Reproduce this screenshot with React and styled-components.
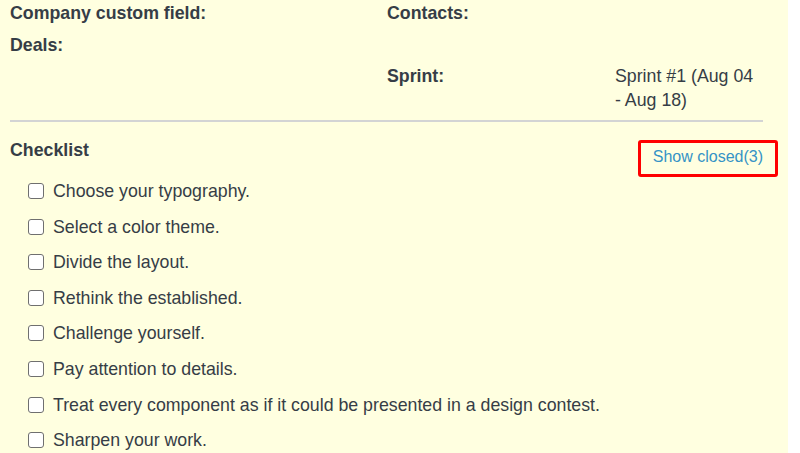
import styled, { createGlobalStyle } from 'styled-components';

const GlobalStyle = createGlobalStyle`
  html, body {
    margin: 0;
    padding: 0;
    background: #ffffff;
  }
  body {
    font-family: 'Liberation Sans', Arial, sans-serif;
  }
`;

const Panel = styled.div`
  width: 788px;
  height: 453px;
  overflow: hidden;
  background: #ffffe0;
  color: #363d46;
  padding: 1px 25px 0 10px;
  box-sizing: border-box;
`;

const Fields = styled.div`
  display: grid;
  grid-template-columns: 377px 1fr;
  padding-bottom: 8px;
  border-bottom: 2px solid #d3d4d4;
`;

const Column = styled.div`
  display: flex;
  flex-direction: column;
  gap: 8px;
`;

const Field = styled.div`
  display: grid;
  grid-template-columns: ${(p) => (p.$labelWidth ? `${p.$labelWidth}px 1fr` : '1fr')};
  min-height: ${(p) => p.$minHeight || 24}px;
  font-size: 17.75px;
  line-height: 24px;
`;

const Label = styled.div`
  font-weight: bold;
`;

const Value = styled.div`
  padding-right: 4px;
`;

const Header = styled.div`
  display: flex;
  justify-content: space-between;
  align-items: flex-start;
  margin-top: 16px;
`;

const Title = styled.div`
  font-size: 17.75px;
  line-height: 24px;
  font-weight: bold;
`;

const ShowClosed = styled.a`
  margin: 2px -15px 0 0;
  padding: 4px 12px 8px;
  border: 3px solid #ff0000;
  border-radius: 3px;
  font-size: 16px;
  line-height: 19px;
  color: #3593c6;
  text-decoration: none;
  cursor: pointer;
`;

const List = styled.ul`
  list-style: none;
  margin: 2px 0 0;
  padding: 0 0 0 18px;
  display: flex;
  flex-direction: column;
  gap: 11.6px;
`;

const Item = styled.li`
  display: flex;
  align-items: center;
  gap: 9px;
  font-size: 17.75px;
  line-height: 24px;
`;

const Box = styled.span`
  width: 16px;
  height: 16px;
  box-sizing: border-box;
  border: 1.5px solid #6f6f6f;
  border-radius: 3px;
  background: #ffffff;
  flex-shrink: 0;
`;

const items = [
  'Choose your typography.',
  'Select a color theme.',
  'Divide the layout.',
  'Rethink the established.',
  'Challenge yourself.',
  'Pay attention to details.',
  'Treat every component as if it could be presented in a design contest.',
  'Sharpen your work.',
];

const App = () => {
  return (
    <>
      <GlobalStyle />
      <Panel>
        <Fields>
          <Column>
            <Field>
              <Label>Company custom field:</Label>
            </Field>
            <Field>
              <Label>Deals:</Label>
            </Field>
          </Column>
          <Column>
            <Field $labelWidth={228} $minHeight={55}>
              <Label>Contacts:</Label>
              <Value />
            </Field>
            <Field $labelWidth={228}>
              <Label>Sprint:</Label>
              <Value>Sprint #1 (Aug 04 - Aug 18)</Value>
            </Field>
          </Column>
        </Fields>
        <Header>
          <Title>Checklist</Title>
          <ShowClosed>Show closed(3)</ShowClosed>
        </Header>
        <List>
          {items.map((text) => (
            <Item key={text}>
              <Box />
              {text}
            </Item>
          ))}
        </List>
      </Panel>
    </>
  );
};

export default App;
